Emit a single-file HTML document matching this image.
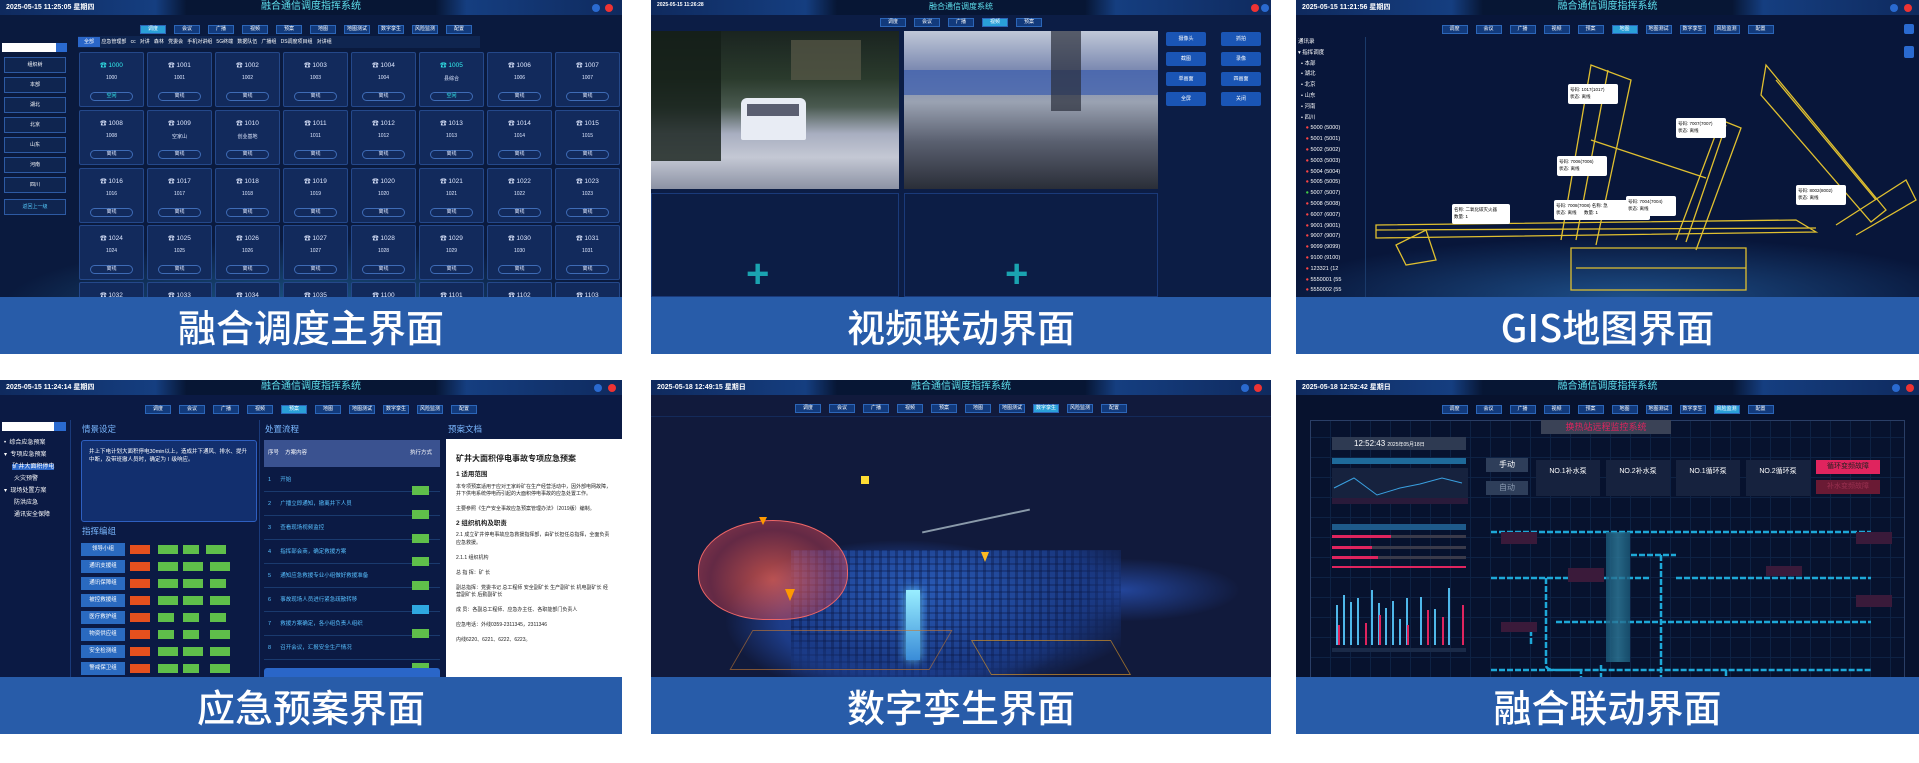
<!DOCTYPE html>
<html><head><meta charset="utf-8">
<style>
*{margin:0;padding:0;box-sizing:border-box}
body{width:1919px;height:763px;background:#fff;position:relative;overflow:hidden;font-family:"Liberation Sans","Noto Sans CJK SC",sans-serif}
.p{position:absolute;overflow:hidden}
.scr{position:absolute;left:0;top:0;right:0;height:297px;background:#0b1738;overflow:hidden}
.cap{position:absolute;left:0;right:0;top:297px;height:57px;background:#285ca9;color:#fff;font-size:38px;text-align:center;line-height:57px;font-family:"Noto Sans CJK SC",sans-serif;font-weight:500}
.top{position:absolute;left:0;top:0;right:0;height:15px;background:linear-gradient(90deg,#0f2a5e,#153e80 25%,#071634 30%,#071634 70%,#153e80 75%,#0f2a5e)}
.date{position:absolute;left:6px;top:2px;font-size:7px;color:#fff;font-weight:bold}
.title{position:absolute;left:0;right:0;top:0;text-align:center;font-size:10px;color:#5fe0ee;line-height:13px}
.nav{position:absolute;top:25px;left:0;right:0;text-align:center;font-size:0}
.nav span{display:inline-block;width:26px;height:9px;margin:0 4px;background:#123a7c;border:1px solid #2c66b8;font-size:5px;color:#fff;line-height:7px;vertical-align:top}
.nav span.on{background:#2aa0d8}
.ic{position:absolute;top:4px;width:8px;height:8px;border-radius:50%}
.card{position:absolute;width:65px;height:55px;background:#122a5c;border:1px solid #24488a;border-radius:2px;color:#dfe8ff;font-size:6px;text-align:center}
.card b{display:block;margin-top:6px;font-weight:normal;font-size:6.5px}
.card i{display:block;margin-top:6px;font-style:normal;font-size:5px}
.card u{position:absolute;left:10px;right:10px;bottom:5px;height:9px;border:1px solid #3e6bb5;border-radius:5px;text-decoration:none;font-size:5px;line-height:7px}
.sb{position:absolute;left:4px;width:62px;height:16px;background:#0f2550;border:1px solid #2d5aa3;color:#fff;font-size:5px;text-align:center;line-height:14px}
.btn{position:absolute;width:40px;height:14px;background:#1a55b5;border-radius:2px;color:#fff;font-size:5px;text-align:center;line-height:14px}
.gl{position:absolute;font-size:6px;color:#fff}
</style></head><body>

<!-- Panel 1 -->
<div class="p" style="left:0;top:0;width:622px;height:354px">
 <div class="scr" style="background:radial-gradient(ellipse 300px 70px at 300px 310px,#1d5a8a,transparent),#0a1a3e">
  <div class="top"></div><div class="date">2025-05-15 11:25:05 星期四</div><div class="title">融合通信调度指挥系统</div>
  <div class="ic" style="left:592px;background:#2a6ad0"></div><div class="ic" style="left:605px;background:#e33"></div>
  <div class="nav" style="left:-10px"><span class="on">调度</span><span>会议</span><span>广播</span><span>视频</span><span>预案</span><span>地图</span><span>地图测试</span><span>数字孪生</span><span>风险监测</span><span>配置</span></div>
  <div style="position:absolute;left:78px;top:36px;width:402px;height:12px;background:#0f2550;font-size:5px;color:#fff;line-height:12px;white-space:nowrap"><span style="background:#2a66c8;padding:2px 6px">全部</span> 应急管理部 &nbsp; cc &nbsp; 对讲 &nbsp; 森林 &nbsp; 党委会 &nbsp; 手机对讲组 &nbsp; 5G终端 &nbsp; 数据队伍 &nbsp; 广播组 &nbsp; DS调度项目组 &nbsp; 对讲组</div>
  <div style="position:absolute;left:2px;top:43px;width:54px;height:9px;background:#fff"></div><div style="position:absolute;left:56px;top:43px;width:11px;height:9px;background:#2a6ad0"></div>
  <div class="sb" style="top:57px">组织树</div><div class="sb" style="top:77px">本部</div><div class="sb" style="top:97px">湖北</div><div class="sb" style="top:117px">北京</div><div class="sb" style="top:137px">山东</div><div class="sb" style="top:157px">河南</div><div class="sb" style="top:177px">四川</div><div class="sb" style="top:199px;color:#5cf">返回上一级</div>
  <div class="card" style="left:79px;top:52px"><b style="color:#3ee">☎ 1000</b><i>1000</i><u style="color:#3ee">空闲</u></div>
  <div class="card" style="left:147px;top:52px"><b>☎ 1001</b><i>1001</i><u>离线</u></div>
  <div class="card" style="left:215px;top:52px"><b>☎ 1002</b><i>1002</i><u>离线</u></div>
  <div class="card" style="left:283px;top:52px"><b>☎ 1003</b><i>1003</i><u>离线</u></div>
  <div class="card" style="left:351px;top:52px"><b>☎ 1004</b><i>1004</i><u>离线</u></div>
  <div class="card" style="left:419px;top:52px"><b style="color:#3ee">☎ 1005</b><i>县综合</i><u style="color:#3ee">空闲</u></div>
  <div class="card" style="left:487px;top:52px"><b>☎ 1006</b><i>1006</i><u>离线</u></div>
  <div class="card" style="left:555px;top:52px"><b>☎ 1007</b><i>1007</i><u>离线</u></div>
  <div class="card" style="left:79px;top:110px"><b>☎ 1008</b><i>1008</i><u>离线</u></div>
  <div class="card" style="left:147px;top:110px"><b>☎ 1009</b><i>空家山</i><u>离线</u></div>
  <div class="card" style="left:215px;top:110px"><b>☎ 1010</b><i>创业基地</i><u>离线</u></div>
  <div class="card" style="left:283px;top:110px"><b>☎ 1011</b><i>1011</i><u>离线</u></div>
  <div class="card" style="left:351px;top:110px"><b>☎ 1012</b><i>1012</i><u>离线</u></div>
  <div class="card" style="left:419px;top:110px"><b>☎ 1013</b><i>1013</i><u>离线</u></div>
  <div class="card" style="left:487px;top:110px"><b>☎ 1014</b><i>1014</i><u>离线</u></div>
  <div class="card" style="left:555px;top:110px"><b>☎ 1015</b><i>1015</i><u>离线</u></div>
  <div class="card" style="left:79px;top:168px"><b>☎ 1016</b><i>1016</i><u>离线</u></div>
  <div class="card" style="left:147px;top:168px"><b>☎ 1017</b><i>1017</i><u>离线</u></div>
  <div class="card" style="left:215px;top:168px"><b>☎ 1018</b><i>1018</i><u>离线</u></div>
  <div class="card" style="left:283px;top:168px"><b>☎ 1019</b><i>1019</i><u>离线</u></div>
  <div class="card" style="left:351px;top:168px"><b>☎ 1020</b><i>1020</i><u>离线</u></div>
  <div class="card" style="left:419px;top:168px"><b>☎ 1021</b><i>1021</i><u>离线</u></div>
  <div class="card" style="left:487px;top:168px"><b>☎ 1022</b><i>1022</i><u>离线</u></div>
  <div class="card" style="left:555px;top:168px"><b>☎ 1023</b><i>1023</i><u>离线</u></div>
  <div class="card" style="left:79px;top:225px"><b>☎ 1024</b><i>1024</i><u>离线</u></div>
  <div class="card" style="left:147px;top:225px"><b>☎ 1025</b><i>1025</i><u>离线</u></div>
  <div class="card" style="left:215px;top:225px"><b>☎ 1026</b><i>1026</i><u>离线</u></div>
  <div class="card" style="left:283px;top:225px"><b>☎ 1027</b><i>1027</i><u>离线</u></div>
  <div class="card" style="left:351px;top:225px"><b>☎ 1028</b><i>1028</i><u>离线</u></div>
  <div class="card" style="left:419px;top:225px"><b>☎ 1029</b><i>1029</i><u>离线</u></div>
  <div class="card" style="left:487px;top:225px"><b>☎ 1030</b><i>1030</i><u>离线</u></div>
  <div class="card" style="left:555px;top:225px"><b>☎ 1031</b><i>1031</i><u>离线</u></div>
  <div class="card" style="left:79px;top:282px"><b>☎ 1032</b></div><div class="card" style="left:147px;top:282px"><b>☎ 1033</b></div><div class="card" style="left:215px;top:282px"><b>☎ 1034</b></div><div class="card" style="left:283px;top:282px"><b>☎ 1035</b></div><div class="card" style="left:351px;top:282px"><b>☎ 1100</b></div><div class="card" style="left:419px;top:282px"><b>☎ 1101</b></div><div class="card" style="left:487px;top:282px"><b>☎ 1102</b></div><div class="card" style="left:555px;top:282px"><b>☎ 1103</b></div>
 </div>
 <div class="cap">融合调度主界面</div>
</div>

<!-- Panel 2 -->
<div class="p" style="left:651px;top:0;width:620px;height:354px">
 <div class="scr" style="background:#0c1d45">
  <div class="top"></div><div class="date" style="font-size:5px">2025-05-15 11:26:28</div><div class="title" style="font-size:8px">融合通信调度系统</div>
  <div class="ic" style="left:600px;background:#e33"></div><div class="ic" style="left:610px;background:#2a6ad0"></div>
  <div class="nav" style="top:18px"><span>调度</span><span>会议</span><span>广播</span><span class="on">视频</span><span>预案</span></div>
  <div style="position:absolute;left:0;top:31px;width:248px;height:158px;background:linear-gradient(180deg,#1a2420 0%,#2a3a2c 30%,#4a5a50 48%,#a8aec0 65%,#c4c8d4 80%,#8c92a4)"></div>
  <div style="position:absolute;left:0;top:31px;width:70px;height:130px;background:#141e18;opacity:.8"></div>
  <div style="position:absolute;left:140px;top:40px;width:70px;height:40px;background:#5a5a48;opacity:.7"></div>
  <div style="position:absolute;left:90px;top:98px;width:65px;height:42px;background:#e8ecf4;border-radius:6px 6px 2px 2px"></div>
  <div style="position:absolute;left:96px;top:104px;width:52px;height:12px;background:#5a5e70"></div>
  <div style="position:absolute;left:253px;top:31px;width:254px;height:158px;background:linear-gradient(180deg,#c0c8d8 0%,#7a88b0 25%,#9aa2b2 45%,#5a6070 70%,#2a2e38)"></div>
  <div style="position:absolute;left:253px;top:70px;width:254px;height:25px;background:#3a5cae;opacity:.7"></div>
  <div style="position:absolute;left:400px;top:31px;width:30px;height:80px;background:#2a2e3a;opacity:.7"></div>
  <div style="position:absolute;left:0;top:193px;width:248px;height:104px;border:1px solid #1a3a7a"></div>
  <div style="position:absolute;left:253px;top:193px;width:254px;height:104px;border:1px solid #1a3a7a"></div>
  <div style="position:absolute;left:95px;top:254px;font-size:40px;color:#1aa3b0;line-height:40px;font-weight:bold">+</div>
  <div style="position:absolute;left:354px;top:254px;font-size:40px;color:#1aa3b0;line-height:40px;font-weight:bold">+</div>
  <div class="btn" style="left:515px;top:32px">摄像头</div><div class="btn" style="left:570px;top:32px">抓拍</div>
  <div class="btn" style="left:515px;top:52px">截图</div><div class="btn" style="left:570px;top:52px">录像</div>
  <div class="btn" style="left:515px;top:72px">单画面</div><div class="btn" style="left:570px;top:72px">四画面</div>
  <div class="btn" style="left:515px;top:92px">全屏</div><div class="btn" style="left:570px;top:92px">关闭</div>
 </div>
 <div class="cap">视频联动界面</div>
</div>

<!-- Panel 3 -->
<div class="p" style="left:1296px;top:0;width:623px;height:354px">
 <div class="scr" style="background:radial-gradient(ellipse 350px 60px at 330px 297px,#1d4e88,transparent),#08163a">
  <div class="top"></div><div class="date">2025-05-15 11:21:56 星期四</div><div class="title">融合通信调度指挥系统</div>
  <div class="ic" style="left:594px;background:#2a6ad0"></div><div class="ic" style="left:608px;background:#e33"></div>
  <div class="nav"><span>调度</span><span>会议</span><span>广播</span><span>视频</span><span>预案</span><span class="on">地图</span><span>地图测试</span><span>数字孪生</span><span>风险监测</span><span>配置</span></div>
  <div style="position:absolute;left:0;top:37px;width:70px;height:260px;border-right:1px solid #1a3a6a;font-size:5.5px;color:#fff;line-height:10.8px;padding-left:2px;white-space:nowrap">通讯录<br>▾ 指挥调度<br>&nbsp;&nbsp;• 本部<br>&nbsp;&nbsp;• 湖北<br>&nbsp;&nbsp;• 北京<br>&nbsp;&nbsp;• 山东<br>&nbsp;&nbsp;• 河南<br>&nbsp;&nbsp;• 四川<br><span style="color:#f44">&nbsp;&nbsp;&nbsp;&nbsp;&nbsp;●</span> 5000 (5000)<br><span style="color:#f44">&nbsp;&nbsp;&nbsp;&nbsp;&nbsp;●</span> 5001 (5001)<br><span style="color:#f44">&nbsp;&nbsp;&nbsp;&nbsp;&nbsp;●</span> 5002 (5002)<br><span style="color:#f44">&nbsp;&nbsp;&nbsp;&nbsp;&nbsp;●</span> 5003 (5003)<br><span style="color:#f44">&nbsp;&nbsp;&nbsp;&nbsp;&nbsp;●</span> 5004 (5004)<br><span style="color:#f44">&nbsp;&nbsp;&nbsp;&nbsp;&nbsp;●</span> 5005 (5005)<br><span style="color:#4c4">&nbsp;&nbsp;&nbsp;&nbsp;&nbsp;●</span> 5007 (5007)<br><span style="color:#f44">&nbsp;&nbsp;&nbsp;&nbsp;&nbsp;●</span> 5008 (5008)<br><span style="color:#f44">&nbsp;&nbsp;&nbsp;&nbsp;&nbsp;●</span> 6007 (6007)<br><span style="color:#f44">&nbsp;&nbsp;&nbsp;&nbsp;&nbsp;●</span> 9001 (9001)<br><span style="color:#f44">&nbsp;&nbsp;&nbsp;&nbsp;&nbsp;●</span> 9007 (9007)<br><span style="color:#f44">&nbsp;&nbsp;&nbsp;&nbsp;&nbsp;●</span> 9099 (9099)<br><span style="color:#f44">&nbsp;&nbsp;&nbsp;&nbsp;&nbsp;●</span> 9100 (9100)<br><span style="color:#f44">&nbsp;&nbsp;&nbsp;&nbsp;&nbsp;●</span> 123321 (12<br><span style="color:#f44">&nbsp;&nbsp;&nbsp;&nbsp;&nbsp;●</span> 5550001 (55<br><span style="color:#f44">&nbsp;&nbsp;&nbsp;&nbsp;&nbsp;●</span> 5550002 (55</div>
  <svg style="position:absolute;left:0;top:0" width="623" height="297" fill="none" stroke="#e0c030" stroke-width="1.3">
   <path d="M80 225 L500 220 L520 232 L80 238 Z M80 230 L520 228"/>
   <path d="M110 265 L100 245 L130 230 L140 260 Z"/>
   <path d="M265 240 L295 65 L335 80 L300 245 M280 240 L312 70"/>
   <path d="M380 240 L425 120 L445 128 L400 250 M390 242 L430 125"/>
   <path d="M295 140 L410 178"/>
   <path d="M470 65 L590 210 L575 222 L465 95 Z M480 80 L580 200"/>
   <path d="M540 225 L610 180 L620 200 L560 235"/>
   <path d="M275 248 L450 248 L450 290 L275 290 Z M280 268 L450 268"/>
  </svg>
  <div style="position:absolute;left:272px;top:84px;width:50px;height:20px;background:#fff;border-radius:2px;font-size:4.5px;line-height:7px;padding:2px">号码: 1017(1017)<br>状态: 离线</div>
  <div style="position:absolute;left:380px;top:118px;width:50px;height:20px;background:#fff;border-radius:2px;font-size:4.5px;line-height:7px;padding:2px">号码: 7007(7007)<br>状态: 离线</div>
  <div style="position:absolute;left:261px;top:156px;width:50px;height:20px;background:#fff;border-radius:2px;font-size:4.5px;line-height:7px;padding:2px">号码: 7006(7006)<br>状态: 离线</div>
  <div style="position:absolute;left:156px;top:204px;width:58px;height:20px;background:#fff;border-radius:2px;font-size:4.5px;line-height:7px;padding:2px">名称: 二氧化碳灭火器<br>数量: 1</div>
  <div style="position:absolute;left:258px;top:200px;width:96px;height:20px;background:#fff;border-radius:2px;font-size:4.5px;line-height:7px;padding:2px">号码: 7008(7008) 名称: 急<br>状态: 离线 &nbsp;&nbsp;&nbsp;&nbsp;&nbsp;数量: 1</div>
  <div style="position:absolute;left:330px;top:196px;width:50px;height:20px;background:#fff;border-radius:2px;font-size:4.5px;line-height:7px;padding:2px">号码: 7004(7004)<br>状态: 离线</div>
  <div style="position:absolute;left:500px;top:185px;width:50px;height:20px;background:#fff;border-radius:2px;font-size:4.5px;line-height:7px;padding:2px">号码: 8002(8002)<br>状态: 离线</div>
  <div style="position:absolute;left:608px;top:24px;width:10px;height:10px;background:#2a6ad0;border-radius:2px"></div>
  <div style="position:absolute;left:608px;top:46px;width:10px;height:12px;background:#2a6ad0;border-radius:2px"></div>
 </div>
 <div class="cap">GIS地图界面</div>
</div>

<!-- Panel 4 -->
<div class="p" style="left:0;top:380px;width:622px;height:354px">
 <div class="scr" style="background:#0b1a44">
  <div class="top"></div><div class="date">2025-05-15 11:24:14 星期四</div><div class="title">融合通信调度指挥系统</div>
  <div class="ic" style="left:594px;background:#2a6ad0"></div><div class="ic" style="left:608px;background:#e33"></div>
  <div class="nav"><span>调度</span><span>会议</span><span>广播</span><span>视频</span><span class="on">预案</span><span>地图</span><span>地图测试</span><span>数字孪生</span><span>风险监测</span><span>配置</span></div>
  <div style="position:absolute;left:2px;top:42px;width:52px;height:9px;background:#fff"></div><div style="position:absolute;left:54px;top:42px;width:12px;height:9px;background:#2a6ad0"></div>
  <div style="position:absolute;left:4px;top:57px;font-size:6px;color:#fff;line-height:12px;white-space:nowrap">• &nbsp;综合应急预案<br>▾ &nbsp;专项应急预案<br>&nbsp;&nbsp;&nbsp;&nbsp;&nbsp;<span style="background:#2a66c8">矿井大面积停电</span><br>&nbsp;&nbsp;&nbsp;&nbsp;&nbsp;&nbsp;火灾预警<br>▾ &nbsp;现场处置方案<br>&nbsp;&nbsp;&nbsp;&nbsp;&nbsp;&nbsp;防洪应急<br>&nbsp;&nbsp;&nbsp;&nbsp;&nbsp;&nbsp;通讯安全保障</div>
  <div style="position:absolute;left:70px;top:40px;width:190px;height:257px;border-left:1px solid #1a3a7a;border-right:1px solid #1a3a7a"></div>
  <div class="gl" style="left:82px;top:43px;font-size:8.5px;color:#7ab8ff">情景设定</div>
  <div style="position:absolute;left:81px;top:60px;width:176px;height:82px;background:#122f6e;border:1px solid #2e5fc0;border-radius:3px;font-size:5.5px;color:#fff;padding:7px;line-height:8px">井上下电计划大面积停电30min以上，造成井下通风、排水、提升中断，及带班撤人员时，确定为Ⅰ级响应。</div>
  <div class="gl" style="left:82px;top:145px;font-size:8.5px;color:#7ab8ff">指挥编组</div>
  <div style="position:absolute;left:81px;top:163px;width:44px;height:13px;background:#2a6ac0;font-size:5.5px;color:#fff;text-align:center;line-height:13px">领导小组</div>
  <div style="position:absolute;left:81px;top:180px;width:44px;height:13px;background:#2a6ac0;font-size:5.5px;color:#fff;text-align:center;line-height:13px">通讯支援组</div>
  <div style="position:absolute;left:81px;top:197px;width:44px;height:13px;background:#2a6ac0;font-size:5.5px;color:#fff;text-align:center;line-height:13px">通讯保障组</div>
  <div style="position:absolute;left:81px;top:214px;width:44px;height:13px;background:#2a6ac0;font-size:5.5px;color:#fff;text-align:center;line-height:13px">被控救援组</div>
  <div style="position:absolute;left:81px;top:231px;width:44px;height:13px;background:#2a6ac0;font-size:5.5px;color:#fff;text-align:center;line-height:13px">医疗救护组</div>
  <div style="position:absolute;left:81px;top:248px;width:44px;height:13px;background:#2a6ac0;font-size:5.5px;color:#fff;text-align:center;line-height:13px">物资供应组</div>
  <div style="position:absolute;left:81px;top:265px;width:44px;height:13px;background:#2a6ac0;font-size:5.5px;color:#fff;text-align:center;line-height:13px">安全检测组</div>
  <div style="position:absolute;left:81px;top:282px;width:44px;height:13px;background:#2a6ac0;font-size:5.5px;color:#fff;text-align:center;line-height:13px">警戒保卫组</div>
  <svg style="position:absolute;left:128px;top:165px" width="120" height="130">
   <g fill="#e5501e"><rect x="2" y="0" width="20" height="9"/><rect x="2" y="17" width="20" height="9"/><rect x="2" y="34" width="20" height="9"/><rect x="2" y="51" width="20" height="9"/><rect x="2" y="68" width="20" height="9"/><rect x="2" y="85" width="20" height="9"/><rect x="2" y="102" width="20" height="9"/><rect x="2" y="119" width="20" height="9"/></g>
   <g fill="#5fbf4a"><rect x="30" y="0" width="20" height="9"/><rect x="55" y="0" width="16" height="9"/><rect x="78" y="0" width="20" height="9"/><rect x="30" y="17" width="20" height="9"/><rect x="55" y="17" width="20" height="9"/><rect x="82" y="17" width="20" height="9"/><rect x="30" y="34" width="20" height="9"/><rect x="55" y="34" width="20" height="9"/><rect x="82" y="34" width="16" height="9"/><rect x="30" y="51" width="20" height="9"/><rect x="55" y="51" width="20" height="9"/><rect x="82" y="51" width="20" height="9"/><rect x="30" y="68" width="16" height="9"/><rect x="55" y="68" width="16" height="9"/><rect x="82" y="68" width="16" height="9"/><rect x="30" y="85" width="16" height="9"/><rect x="55" y="85" width="16" height="9"/><rect x="82" y="85" width="20" height="9"/><rect x="30" y="102" width="20" height="9"/><rect x="55" y="102" width="20" height="9"/><rect x="82" y="102" width="20" height="9"/><rect x="30" y="119" width="20" height="9"/><rect x="55" y="119" width="16" height="9"/><rect x="82" y="119" width="20" height="9"/></g>
  </svg>
  <div class="gl" style="left:265px;top:43px;font-size:8.5px;color:#7ab8ff">处置流程</div>
  <div style="position:absolute;left:264px;top:60px;width:176px;height:27px;background:#3a5290;font-size:5.5px;color:#fff;line-height:27px;padding-left:4px">序号 &nbsp;&nbsp;&nbsp;方案内容<span style="position:absolute;right:8px">执行方式</span></div>
  <div style="position:absolute;left:264px;top:88px;width:176px;height:209px;font-size:5.5px;color:#58c0ff;line-height:24px;padding-left:4px;background:repeating-linear-gradient(#0b1a44 0 23px,#1a3a6e 23px 24px)">1 &nbsp;&nbsp;&nbsp;&nbsp;&nbsp;开始<br>2 &nbsp;&nbsp;&nbsp;&nbsp;&nbsp;广播立即通知，撤离井下人员<br>3 &nbsp;&nbsp;&nbsp;&nbsp;&nbsp;查看现场视频监控<br>4 &nbsp;&nbsp;&nbsp;&nbsp;&nbsp;指挥部会商，确定救援方案<br>5 &nbsp;&nbsp;&nbsp;&nbsp;&nbsp;通知应急救援专业小组做好救援准备<br>6 &nbsp;&nbsp;&nbsp;&nbsp;&nbsp;事故现场人员进行紧急疏散转移<br>7 &nbsp;&nbsp;&nbsp;&nbsp;&nbsp;救援方案确定，各小组负责人组织<br>8 &nbsp;&nbsp;&nbsp;&nbsp;&nbsp;召开会议，汇报安全生产情况</div>
  <svg style="position:absolute;left:412px;top:106px" width="20" height="230"><g fill="#5fbf4a"><rect y="0" width="17" height="9"/><rect y="24" width="17" height="9"/><rect y="48" width="17" height="9"/><rect y="71" width="17" height="9"/><rect y="95" width="17" height="9"/><rect y="143" width="17" height="9"/><rect y="177" width="17" height="9"/></g><rect y="119" width="17" height="9" fill="#2fa8e0"/></svg>
  <div style="position:absolute;left:264px;top:288px;width:176px;height:9px;background:#2a66c8;border-radius:3px 3px 0 0"></div>
  <div class="gl" style="left:448px;top:43px;font-size:8.5px;color:#7ab8ff">预案文档</div>
  <div style="position:absolute;left:446px;top:59px;width:176px;height:238px;background:#fff;font-size:5px;color:#222;padding:14px 10px;line-height:7.5px">
   <div style="font-size:8px;font-weight:bold;line-height:12px">矿井大面积停电事故专项应急预案</div>
   <div style="font-size:6.5px;font-weight:bold;margin:6px 0 5px">1 适用范围</div>
   本专项预案适用于应对王家岭矿在生产经营活动中，因外部电网故障，井下供电系统停电而引起的大面积停电事故的应急处置工作。<br><br>
   主要参照《生产安全事故应急预案管理办法》（2019版）编制。
   <div style="font-size:6.5px;font-weight:bold;margin:6px 0 5px">2 组织机构及职责</div>
   2.1 成立矿井停电事故应急救援指挥部，由矿长担任总指挥，全面负责应急救援。<br><br>2.1.1 组织机构<br><br>总 指 挥：矿 长<br><br>副总指挥：党委书记 总工程师 安全副矿长 生产副矿长 机电副矿长 经营副矿长 后勤副矿长<br><br>成 员：各副总工程师、应急办主任、各职能部门负责人<br><br>应急电话：外线0359-2311345，2311346<br><br>内线6220、6221、6222、6223。
  </div>
 </div>
 <div class="cap" style="top:297px">应急预案界面</div>
</div>

<!-- Panel 5 -->
<div class="p" style="left:651px;top:380px;width:620px;height:354px">
 <div class="scr" style="background:#111a3c">
  <div class="top"></div><div class="date">2025-05-18 12:49:15 星期日</div><div class="title">融合通信调度指挥系统</div>
  <div class="ic" style="left:590px;background:#2a6ad0"></div><div class="ic" style="left:603px;background:#e33"></div>
  <div class="nav" style="top:24px"><span>调度</span><span>会议</span><span>广播</span><span>视频</span><span>预案</span><span>地图</span><span>地图测试</span><span class="on">数字孪生</span><span>风险监测</span><span>配置</span></div>
  <div style="position:absolute;left:0;top:36px;right:0;height:1px;background:#142a5a"></div>
  <div style="position:absolute;left:0;top:140px;width:620px;height:160px;background:radial-gradient(ellipse 220px 100px at 250px 100px,#2750a8,#1d3c88 55%,transparent 80%),radial-gradient(ellipse 170px 45px at 470px 70px,#23459a,transparent 70%)"></div>
  <div style="position:absolute;left:140px;top:170px;width:330px;height:127px;background:radial-gradient(ellipse at 40% 30%,#2a5cb8,#1a3a86 60%,transparent 85%);opacity:.9"></div>
  <div style="position:absolute;left:140px;top:170px;width:330px;height:127px;background:repeating-linear-gradient(90deg,rgba(10,20,60,.35) 0 3px,transparent 3px 8px),repeating-linear-gradient(0deg,rgba(10,20,60,.3) 0 2px,transparent 2px 7px);-webkit-mask:radial-gradient(ellipse at 40% 30%,#000 55%,transparent 80%)"></div>
  <div style="position:absolute;left:47px;top:140px;width:150px;height:100px;border-radius:50% 50% 45% 45%;background:radial-gradient(ellipse at 50% 60%,rgba(255,100,80,.7),rgba(200,60,80,.45) 60%,rgba(230,80,90,.6));border:1px solid #e66"></div>
  <div style="position:absolute;left:255px;top:210px;width:14px;height:70px;background:linear-gradient(#9ef,#3a8cd8);box-shadow:0 0 10px #6cf"></div>
  <div style="position:absolute;left:270px;top:140px;width:110px;height:2px;background:#8a9aaa;transform:rotate(-12deg)"></div>
  <div style="position:absolute;left:90px;top:250px;width:200px;height:40px;border:1px solid #c87a30;opacity:.6;transform:skewX(-30deg)"></div>
  <div style="position:absolute;left:330px;top:260px;width:140px;height:35px;border:1px solid #d0902a;opacity:.7;transform:skewX(30deg)"></div>
  <div style="position:absolute;left:210px;top:96px;width:8px;height:8px;background:#fd3"></div>
  <div style="position:absolute;left:108px;top:137px;width:0;height:0;border:4px solid transparent;border-top:8px solid #f90"></div>
  <div style="position:absolute;left:134px;top:209px;width:0;height:0;border:5px solid transparent;border-top:12px solid #f90"></div>
  <div style="position:absolute;left:330px;top:172px;width:0;height:0;border:4px solid transparent;border-top:10px solid #fb2"></div>
 </div>
 <div class="cap">数字孪生界面</div>
</div>

<!-- Panel 6 -->
<div class="p" style="left:1296px;top:380px;width:623px;height:354px">
 <div class="scr" style="background:#07122e">
  <div class="top"></div><div class="date">2025-05-18 12:52:42 星期日</div><div class="title">融合通信调度指挥系统</div>
  <div class="ic" style="left:596px;background:#2a6ad0"></div><div class="ic" style="left:610px;background:#e33"></div>
  <div class="nav"><span>调度</span><span>会议</span><span>广播</span><span>视频</span><span>预案</span><span>地图</span><span>地图测试</span><span>数字孪生</span><span class="on">风险监测</span><span>配置</span></div>
  <div style="position:absolute;left:14px;top:40px;width:595px;height:257px;border:1px solid #2a3e66;border-bottom:none;background:repeating-linear-gradient(0deg,transparent 0 19px,#0e2244 19px 20px),repeating-linear-gradient(90deg,transparent 0 19px,#0e2244 19px 20px)"></div>
  <div style="position:absolute;left:245px;top:40px;width:130px;height:14px;background:#3a4256;color:#e0245e;font-size:9px;text-align:center;line-height:14px">换热站远程监控系统</div>
  <div style="position:absolute;left:36px;top:57px;width:134px;height:13px;background:#2e3a52;color:#fff;font-size:8px;line-height:13px;padding-left:22px">12:52:43 <span style="font-size:5px">2025年05月18日</span></div>
  <div style="position:absolute;left:36px;top:78px;width:134px;height:6px;background:#1e6a9a"></div>
  <svg style="position:absolute;left:36px;top:88px" width="136" height="36"><rect width="136" height="36" fill="#16223e"/><polyline points="2,20 22,10 45,27 68,20 88,16 110,10 130,15" fill="none" stroke="#3aa0e0" stroke-width="1"/><rect y="30" width="136" height="6" fill="#2a1a3a"/></svg>
  <div style="position:absolute;left:36px;top:144px;width:134px;height:6px;background:#1e5a8a"></div>
  <div style="position:absolute;left:36px;top:155px;width:134px;height:3px;background:#3a3a4a"><div style="width:44%;height:3px;background:#e0245e"></div></div>
  <div style="position:absolute;left:36px;top:166px;width:134px;height:3px;background:#3a3a4a"><div style="width:30%;height:3px;background:#e0245e"></div></div>
  <div style="position:absolute;left:36px;top:176px;width:134px;height:3px;background:#3a3a4a"><div style="width:34%;height:3px;background:#e0245e"></div></div>
  <div style="position:absolute;left:36px;top:186px;width:134px;height:2px;background:#e0245e"></div>
  <svg style="position:absolute;left:36px;top:205px" width="136" height="60"><g fill="#4fb8ea"><rect x="4" y="20" width="2" height="40"/><rect x="11" y="10" width="2" height="50"/><rect x="18" y="17" width="2" height="43"/><rect x="25" y="13" width="2" height="47"/><rect x="39" y="5" width="2" height="55"/><rect x="46" y="18" width="2" height="42"/><rect x="53" y="23" width="2" height="37"/><rect x="60" y="16" width="2" height="44"/><rect x="67" y="34" width="2" height="26"/><rect x="74" y="13" width="2" height="47"/><rect x="88" y="12" width="2" height="48"/><rect x="102" y="24" width="2" height="36"/><rect x="116" y="3" width="2" height="57"/></g><g fill="#e0245e"><rect x="6" y="40" width="2" height="20"/><rect x="33" y="38" width="2" height="22"/><rect x="47" y="30" width="2" height="30"/><rect x="75" y="40" width="2" height="20"/><rect x="95" y="25" width="2" height="35"/><rect x="110" y="32" width="2" height="28"/><rect x="130" y="20" width="2" height="40"/></g></svg>
  <div style="position:absolute;left:36px;top:268px;width:134px;height:4px;background:#1a2a48"></div>
  <div style="position:absolute;left:190px;top:78px;width:42px;height:14px;background:#2e3e5a;color:#fff;font-size:8px;text-align:center;line-height:14px">手动</div>
  <div style="position:absolute;left:190px;top:101px;width:42px;height:14px;background:#2e3e5a;color:#8a9ab0;font-size:8px;text-align:center;line-height:14px">自动</div>
  <div style="position:absolute;left:240px;top:80px;width:64px;height:36px;background:#16223e;color:#fff;font-size:7px;text-align:center;padding-top:6px">NO.1补水泵</div>
  <div style="position:absolute;left:310px;top:80px;width:64px;height:36px;background:#16223e;color:#fff;font-size:7px;text-align:center;padding-top:6px">NO.2补水泵</div>
  <div style="position:absolute;left:380px;top:80px;width:64px;height:36px;background:#16223e;color:#fff;font-size:7px;text-align:center;padding-top:6px">NO.1循环泵</div>
  <div style="position:absolute;left:450px;top:80px;width:64px;height:36px;background:#16223e;color:#fff;font-size:7px;text-align:center;padding-top:6px">NO.2循环泵</div>
  <div style="position:absolute;left:520px;top:80px;width:64px;height:14px;background:#e0245e;color:#222;font-size:7px;text-align:center;line-height:14px">循环变频故障</div>
  <div style="position:absolute;left:520px;top:100px;width:64px;height:14px;background:#6a1a34;color:#9a3050;font-size:7px;text-align:center;line-height:14px">补水变频故障</div>
  <svg style="position:absolute;left:190px;top:125px" width="390" height="172" fill="none" stroke="#1ea8d8" stroke-width="2.5" stroke-dasharray="6 2">
   <path d="M5 27 H385 M5 73 H165 M190 73 H385 M175 50 V270 M60 73 V160 Q60 165 70 165 H385 M145 50 H190 M45 117 V140 M70 117 H385 M190 117 H385 M115 160 V255 M5 165 H95 V172"/>
   <path d="M240 165 V255"/>
  </svg>
  <div style="position:absolute;left:310px;top:152px;width:24px;height:130px;background:linear-gradient(90deg,#1a5a7a,#2e7a9a,#1a5a7a);opacity:.8"></div>
  <div style="position:absolute;left:205px;top:152px;width:36px;height:12px;background:#3a1a3a"></div>
  <div style="position:absolute;left:560px;top:152px;width:36px;height:12px;background:#3a1a3a"></div>
  <div style="position:absolute;left:272px;top:188px;width:36px;height:14px;background:#3a1a3a"></div>
  <div style="position:absolute;left:470px;top:186px;width:36px;height:10px;background:#3a1a3a"></div>
  <div style="position:absolute;left:205px;top:242px;width:36px;height:10px;background:#3a1a3a"></div>
  <div style="position:absolute;left:560px;top:215px;width:36px;height:12px;background:#3a1a3a"></div>
 </div>
 <div class="cap">融合联动界面</div>
</div>

</body></html>
